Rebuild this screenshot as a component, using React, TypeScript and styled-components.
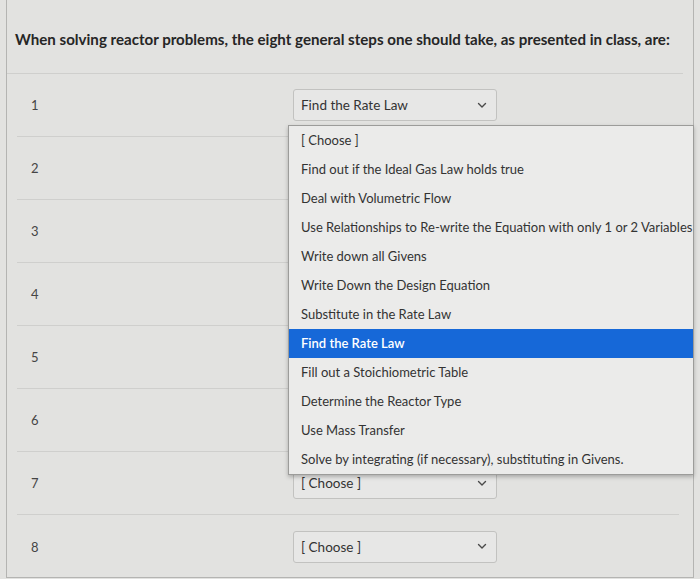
import styled, { createGlobalStyle } from "styled-components";

const steps = [
  "[ Choose ]",
  "Find out if the Ideal Gas Law holds true",
  "Deal with Volumetric Flow",
  "Use Relationships to Re-write the Equation with only 1 or 2 Variables",
  "Write down all Givens",
  "Write Down the Design Equation",
  "Substitute in the Rate Law",
  "Find the Rate Law",
  "Fill out a Stoichiometric Table",
  "Determine the Reactor Type",
  "Use Mass Transfer",
  "Solve by integrating (if necessary), substituting in Givens.",
];

const answers = [
  "Find the Rate Law",
  "[ Choose ]",
  "[ Choose ]",
  "[ Choose ]",
  "[ Choose ]",
  "[ Choose ]",
  "[ Choose ]",
  "[ Choose ]",
];

const Chevron = () => (
  <svg width="10" height="7" viewBox="0 0 10 7" fill="none">
    <path d="M1.5 1.5 L5 5 L8.5 1.5" stroke="#4a4a4a" strokeWidth="1.4" strokeLinecap="round" strokeLinejoin="round" />
  </svg>
);

const App = () => {
  return (
    <>
      <GlobalStyle />
      <Page>
        <Card>
          <Question>
            When solving reactor problems, the eight general steps one should take, as presented in class, are:
          </Question>
          <Rows>
            {answers.map((answer, i) => (
              <Row key={i} $last={i === answers.length - 1}>
                <Num>{i + 1}</Num>
                <SelectWrap>
                  {/* rows 2-6 sit under the open menu, as in the reference */}
                  <Select $hidden={i > 0 && i < 6}>
                    <span>{answer}</span>
                    <Chevron />
                  </Select>
                  {i === 0 && (
                    <Menu>
                      {steps.map((step) => (
                        <MenuItem key={step} $active={step === "Find the Rate Law"}>
                          {step}
                        </MenuItem>
                      ))}
                    </Menu>
                  )}
                </SelectWrap>
              </Row>
            ))}
          </Rows>
        </Card>
      </Page>
    </>
  );
};

export default App;

const GlobalStyle = createGlobalStyle`
  html, body {
    margin: 0;
    padding: 0;
    background: #e2e2e0;
    font-family: Lato, "Open Sans", sans-serif;
    color: #2b2b2b;
  }
`;

const Page = styled.div`
  height: 579px;
  padding: 0 6px;
  box-sizing: border-box;
  overflow: hidden;
`;

const Card = styled.div`
  height: 578px;
  box-sizing: border-box;
  border: 1px solid #b4b4b2;
  border-top: none;
`;

const Question = styled.div`
  height: 74px;
  box-sizing: border-box;
  padding: 29px 0 0 8px;
  margin: 0 10px 0 0;
  font-size: 15.1px;
  line-height: 20px;
  font-weight: 700;
  white-space: nowrap;
  color: #262626;
  border-bottom: 1px solid #cfcfcd;
`;

const Rows = styled.div`
  display: flex;
  flex-direction: column;
`;

const Row = styled.div<{ $last: boolean }>`
  display: grid;
  grid-template-columns: 276px auto;
  align-items: center;
  height: 63px;
  box-sizing: border-box;
  margin: 0 14px 0 10px;
  border-bottom: ${({ $last }) => ($last ? "none" : "1px solid #cfcfcd")};
`;

const Num = styled.div`
  padding-left: 14px;
  font-size: 13px;
  color: #454545;
`;

const SelectWrap = styled.div`
  position: relative;
  width: 204px;
`;

const Select = styled.div<{ $hidden: boolean }>`
  display: flex;
  align-items: center;
  justify-content: space-between;
  height: 32px;
  box-sizing: border-box;
  padding: 0 9px 0 7px;
  background: #e7e7e6;
  border: 1px solid #c2c2c0;
  border-radius: 3px;
  font-size: 13.5px;
  color: #333;
  visibility: ${({ $hidden }) => ($hidden ? "hidden" : "visible")};
`;

const Menu = styled.div`
  position: absolute;
  top: 36px;
  left: -5px;
  width: 404px;
  background: #ebebea;
  border: 1px solid #9c9c9a;
  box-shadow: 0 2px 4px rgba(0, 0, 0, 0.25);
  z-index: 10;
`;

const MenuItem = styled.div<{ $active: boolean }>`
  height: 29px;
  line-height: 29px;
  padding-left: 12px;
  white-space: nowrap;
  font-size: 13px;
  color: ${({ $active }) => ($active ? "#ffffff" : "#333")};
  background: ${({ $active }) => ($active ? "#1668d8" : "transparent")};
  font-weight: ${({ $active }) => ($active ? 600 : 400)};
`;
